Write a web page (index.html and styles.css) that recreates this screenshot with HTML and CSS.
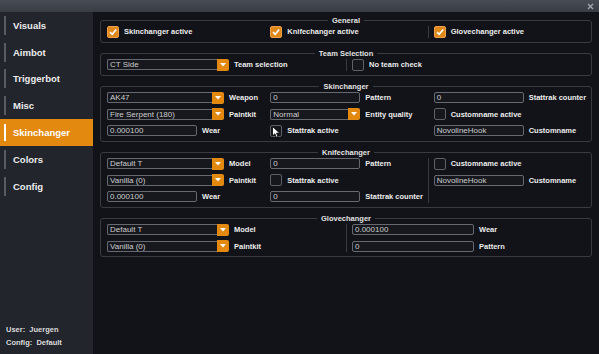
FILE: index.html
```html
<!DOCTYPE html>
<html>
<head>
<meta charset="utf-8">
<link rel="stylesheet" href="styles.css">
</head>
<body>
<div class="window">
  <header class="titlebar">
    <svg class="close" width="7" height="7" viewBox="0 0 7 7"><path d="M1 1L6 6M6 1L1 6" stroke="#a3a8b0" stroke-width="1.3"/></svg>
  </header>
  <div class="body">
    <nav class="sidebar">
      <ul class="menu">
        <li class="item">Visuals</li>
        <li class="item">Aimbot</li>
        <li class="item">Triggerbot</li>
        <li class="item">Misc</li>
        <li class="item active">Skinchanger</li>
        <li class="item">Colors</li>
        <li class="item">Config</li>
      </ul>
      <div class="userinfo">
        <div>User:&nbsp; Juergen</div>
        <div>Config:&nbsp; Default</div>
      </div>
    </nav>
    <main class="content">
      <fieldset class="group">
        <legend>General</legend>
        <div class="cols three">
          <div class="col">
            <div class="row"><span class="check on"><svg width="10" height="10" viewBox="0 0 10 10"><path d="M2 5.2L4.2 7.3L8.2 2.6" fill="none" stroke="#fff" stroke-width="1.6"/></svg></span><span class="label">Skinchanger active</span></div>
          </div>
          <div class="col">
            <div class="row"><span class="check on"><svg width="10" height="10" viewBox="0 0 10 10"><path d="M2 5.2L4.2 7.3L8.2 2.6" fill="none" stroke="#fff" stroke-width="1.6"/></svg></span><span class="label">Knifechanger active</span></div>
          </div>
          <div class="col sep">
            <div class="row"><span class="check on"><svg width="10" height="10" viewBox="0 0 10 10"><path d="M2 5.2L4.2 7.3L8.2 2.6" fill="none" stroke="#fff" stroke-width="1.6"/></svg></span><span class="label">Glovechanger active</span></div>
          </div>
        </div>
      </fieldset>

      <fieldset class="group">
        <legend>Team Selection</legend>
        <div class="cols two">
          <div class="col">
            <div class="row"><div class="combo wide2"><span class="value">CT Side</span><span class="btn"><svg width="6" height="4" viewBox="0 0 6 4"><path d="M0 0H6L3 3.5Z" fill="#fff"/></svg></span></div><span class="label">Team selection</span></div>
          </div>
          <div class="col sep">
            <div class="row"><span class="check"></span><span class="label">No team check</span></div>
          </div>
        </div>
      </fieldset>

      <fieldset class="group">
        <legend>Skinchanger</legend>
        <div class="cols three">
          <div class="col">
            <div class="row"><div class="combo wide"><span class="value">AK47</span><span class="btn"><svg width="6" height="4" viewBox="0 0 6 4"><path d="M0 0H6L3 3.5Z" fill="#fff"/></svg></span></div><span class="label">Weapon</span></div>
            <div class="row"><div class="combo wide"><span class="value">Fire Serpent (180)</span><span class="btn"><svg width="6" height="4" viewBox="0 0 6 4"><path d="M0 0H6L3 3.5Z" fill="#fff"/></svg></span></div><span class="label">Paintkit</span></div>
            <div class="row"><span class="input">0.000100</span><span class="label">Wear</span></div>
          </div>
          <div class="col">
            <div class="row"><span class="input">0</span><span class="label">Pattern</span></div>
            <div class="row"><div class="combo"><span class="value">Normal</span><span class="btn"><svg width="6" height="4" viewBox="0 0 6 4"><path d="M0 0H6L3 3.5Z" fill="#fff"/></svg></span></div><span class="label">Entity quality</span></div>
            <div class="row"><span class="check hover"><svg class="cursor" width="9" height="12" viewBox="0 0 9 12"><path d="M0.5 0.5V10L2.8 7.8L4.4 11.3L6 10.6L4.5 7.2H7.8Z" fill="#fff" stroke="#000" stroke-width="0.8"/></svg></span><span class="label">Stattrak active</span></div>
          </div>
          <div class="col">
            <div class="row"><span class="input">0</span><span class="label">Stattrak counter</span></div>
            <div class="row"><span class="check"></span><span class="label">Customname active</span></div>
            <div class="row"><span class="input">NovolineHook</span><span class="label">Customname</span></div>
          </div>
        </div>
      </fieldset>

      <fieldset class="group">
        <legend>Knifechanger</legend>
        <div class="cols three">
          <div class="col">
            <div class="row"><div class="combo wide"><span class="value">Default T</span><span class="btn"><svg width="6" height="4" viewBox="0 0 6 4"><path d="M0 0H6L3 3.5Z" fill="#fff"/></svg></span></div><span class="label">Model</span></div>
            <div class="row"><div class="combo wide"><span class="value">Vanilla (0)</span><span class="btn"><svg width="6" height="4" viewBox="0 0 6 4"><path d="M0 0H6L3 3.5Z" fill="#fff"/></svg></span></div><span class="label">Paintkit</span></div>
            <div class="row"><span class="input">0.000100</span><span class="label">Wear</span></div>
          </div>
          <div class="col">
            <div class="row"><span class="input">0</span><span class="label">Pattern</span></div>
            <div class="row"><span class="check"></span><span class="label">Stattrak active</span></div>
            <div class="row"><span class="input">0</span><span class="label">Stattrak counter</span></div>
          </div>
          <div class="col sep">
            <div class="row"><span class="check"></span><span class="label">Customname active</span></div>
            <div class="row"><span class="input">NovolineHook</span><span class="label">Customname</span></div>
          </div>
        </div>
      </fieldset>

      <fieldset class="group">
        <legend>Glovechanger</legend>
        <div class="cols two">
          <div class="col">
            <div class="row"><div class="combo wide2"><span class="value">Default T</span><span class="btn"><svg width="6" height="4" viewBox="0 0 6 4"><path d="M0 0H6L3 3.5Z" fill="#fff"/></svg></span></div><span class="label">Model</span></div>
            <div class="row"><div class="combo wide2"><span class="value">Vanilla (0)</span><span class="btn"><svg width="6" height="4" viewBox="0 0 6 4"><path d="M0 0H6L3 3.5Z" fill="#fff"/></svg></span></div><span class="label">Paintkit</span></div>
          </div>
          <div class="col sep">
            <div class="row"><span class="input wide2">0.000100</span><span class="label">Wear</span></div>
            <div class="row"><span class="input wide2">0</span><span class="label">Pattern</span></div>
          </div>
        </div>
      </fieldset>
    </main>
  </div>
</div>
</body>
</html>
```

FILE: styles.css
```css
* { box-sizing: border-box; margin: 0; padding: 0; }
html, body { width: 599px; height: 354px; overflow: hidden; background: #111318; }
body { font-family: "Liberation Sans", Arial, sans-serif; color: #e6e6e6; }

.window { display: flex; flex-direction: column; height: 354px; }

.titlebar {
  height: 12px;
  background: linear-gradient(#474b53, #383c43);
  display: flex;
  justify-content: flex-end;
  align-items: center;
  padding-right: 5px;
}
.close { display: block; }

.body { flex: 1; display: flex; min-height: 0; }

.sidebar {
  width: 93px;
  background: #22252c;
  display: flex;
  flex-direction: column;
  justify-content: space-between;
}
.menu { list-style: none; }
.item {
  height: 26.8px;
  display: flex;
  align-items: center;
  padding-left: 4px;
  font-size: 9.5px;
  font-weight: bold;
  color: #ececec;
}
.item::before {
  content: "";
  width: 2px;
  height: 19px;
  background: #575b62;
  margin-right: 7px;
}
.item.active { background: #e3890f; color: #fff; }
.item.active::before { background: #fff; height: 17px; }

.userinfo {
  padding: 0 0 5px 6px;
  font-size: 7.5px;
  font-weight: bold;
  line-height: 12.5px;
  color: #dcdcdc;
}

.content {
  flex: 1;
  padding: 3.5px 7px 0 7px;
  display: flex;
  flex-direction: column;
  gap: 6px;
}

.group {
  border: 1px solid #383b42;
  border-radius: 3px;
  padding: 1px 0 4px 0;
  min-width: 0;
}
.group legend {
  margin: 0 auto;
  padding: 0 4px;
  font-size: 7.5px;
  line-height: 9px;
  font-weight: bold;
  color: #e2e2e2;
}

.cols { display: grid; }
.cols.three { grid-template-columns: repeat(3, 1fr); }
.cols.two { grid-template-columns: repeat(2, 1fr); }
.col {
  display: flex;
  flex-direction: column;
  gap: 4.6px;
  padding-left: 6px;
  min-width: 0;
}
.col.sep { border-left: 1px solid #383b42; padding-left: 5px; }

.row {
  display: flex;
  align-items: center;
  gap: 5px;
  height: 12px;
  white-space: nowrap;
}
.label {
  font-size: 7.5px;
  font-weight: bold;
  color: #ececec;
}

.input {
  width: 90px;
  height: 11px;
  border: 1px solid #66696f;
  border-radius: 2px;
  background: #16181d;
  font-size: 8px;
  line-height: 9px;
  color: #cdcdcd;
  padding-left: 2px;
  overflow: hidden;
}
.input.wide2 { width: 122px; }

.combo { display: flex; align-items: center; width: 90px; height: 12px; }
.combo.wide { width: 117px; }
.combo.wide2 { width: 122px; }
.combo .value {
  flex: 1;
  height: 11px;
  border: 1px solid #66696f;
  border-right: none;
  border-radius: 2px 0 0 2px;
  background: #16181d;
  font-size: 8px;
  line-height: 9px;
  color: #cdcdcd;
  padding-left: 2px;
  overflow: hidden;
}
.combo .btn {
  width: 12px;
  height: 12px;
  background: #e3890f;
  border-radius: 0 2px 2px 0;
  display: flex;
  align-items: center;
  justify-content: center;
}
.combo .btn svg { display: block; }

.check {
  position: relative;
  flex: none;
  width: 12px;
  height: 12px;
  border: 1px solid #5d6067;
  border-radius: 2px;
  background: #15171c;
  display: flex;
  align-items: center;
  justify-content: center;
}
.check.on { background: #e0881a; border-color: #eea04a; }
.check svg { display: block; }
.check .cursor { position: absolute; left: 1px; top: 0; }
```
